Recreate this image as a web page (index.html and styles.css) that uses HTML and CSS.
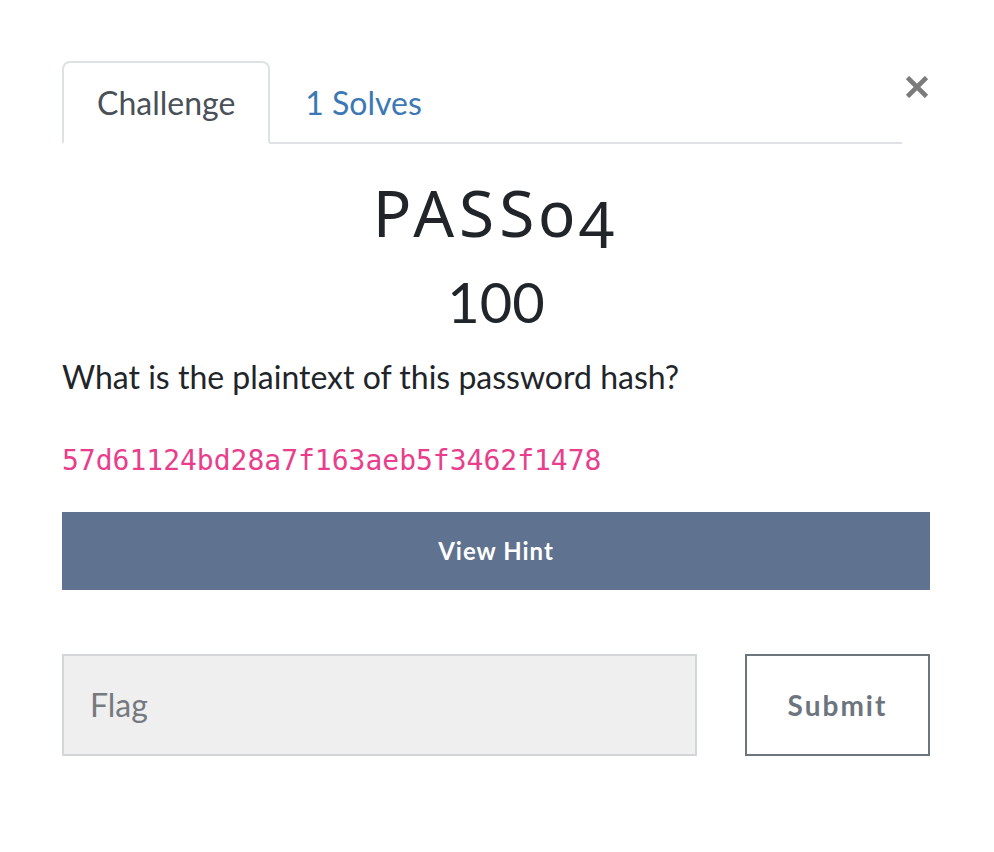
FILE: index.html
```html
<!DOCTYPE html>
<html lang="en">
<head>
<meta charset="utf-8">
<title>PASS04</title>
<link rel="stylesheet" href="styles.css">
</head>
<body>
<div class="modal-body">
  <div class="head">
    <ul class="tabs">
      <li class="tab active">Challenge</li>
      <li class="tab link">1 Solves</li>
    </ul>
    <button class="close" aria-label="Close">
      <svg width="26" height="22" viewBox="0 0 26 22"><path d="M3.5 1.5 L22.5 20.5 M22.5 1.5 L3.5 20.5" stroke="#7b7b7b" stroke-width="4.6" fill="none"/></svg>
    </button>
  </div>
  <h2 class="name">PASS04</h2>
  <h3 class="value">100</h3>
  <p class="desc">What is the plaintext of this password hash?</p>
  <p class="hash"><code>57d61124bd28a7f163aeb5f3462f1478</code></p>
  <button class="hint">View Hint</button>
  <form class="submit-row">
    <input class="flag" type="text" placeholder="Flag">
    <button class="submit" type="button">Submit</button>
  </form>
</div>
</body>
</html>
```
FILE: styles.css
```css
html, body {
  margin: 0;
  padding: 0;
  background: #fff;
}
body {
  font-family: Lato, "Liberation Sans", sans-serif;
  font-size: 32px;
  line-height: 1.5;
  color: #212529;
}
.modal-body {
  padding: 61px 64px 0 62px;
}
.head {
  display: flex;
  align-items: flex-start;
}
.tabs {
  flex: 1;
  display: flex;
  list-style: none;
  margin: 0;
  padding: 0;
  border-bottom: 2px solid #dee2e6;
}
.tab {
  padding: 16px 33px 15px;
  border: 2px solid transparent;
  border-radius: 8px 8px 0 0;
  margin-bottom: -2px;
  color: #3b78b4;
}
.tab.active {
  color: #495057;
  border-color: #dee2e6 #dee2e6 #fff;
  background: #fff;
}
.close {
  width: 28px;
  padding: 0;
  margin: 15px 0 0;
  border: 0;
  background: none;
  display: flex;
  justify-content: flex-end;
}
.name {
  margin: 31px 0 16px;
  text-align: center;
  font-family: "Noto Sans", Lato, sans-serif;
  font-variant-numeric: oldstyle-nums;
  font-weight: 400;
  font-size: 64px;
  line-height: 1.2;
  letter-spacing: 5px;
}
.value {
  margin: 0 0 18px;
  text-align: center;
  font-weight: 400;
  font-size: 56px;
  line-height: 1.2;
}
.desc {
  margin: 0 0 33px;
}
.hash {
  margin: 0 0 30px;
}
.hash code {
  font-family: "DejaVu Sans Mono", "Liberation Mono", monospace;
  font-size: 28px;
  color: #e83e8c;
}
.hint {
  display: block;
  width: 100%;
  height: 78px;
  border: 0;
  background: #5f728f;
  color: #fff;
  font-family: Lato, sans-serif;
  font-weight: 700;
  font-size: 24px;
  letter-spacing: 1px;
}
.submit-row {
  display: flex;
  gap: 48px;
  margin: 64px 0 0;
}
.flag {
  flex: 1;
  height: 102px;
  box-sizing: border-box;
  border: 2px solid #d3d6d9;
  background: #efefef;
  padding: 0 26px;
  font-family: Lato, sans-serif;
  font-size: 32px;
  color: #495057;
}
.flag::placeholder {
  color: #757a80;
}
.submit {
  width: 185px;
  height: 102px;
  box-sizing: border-box;
  border: 2px solid #6c757d;
  background: #fff;
  color: #6c757d;
  font-family: Lato, sans-serif;
  font-weight: 700;
  font-size: 28px;
  letter-spacing: 2px;
}
```
